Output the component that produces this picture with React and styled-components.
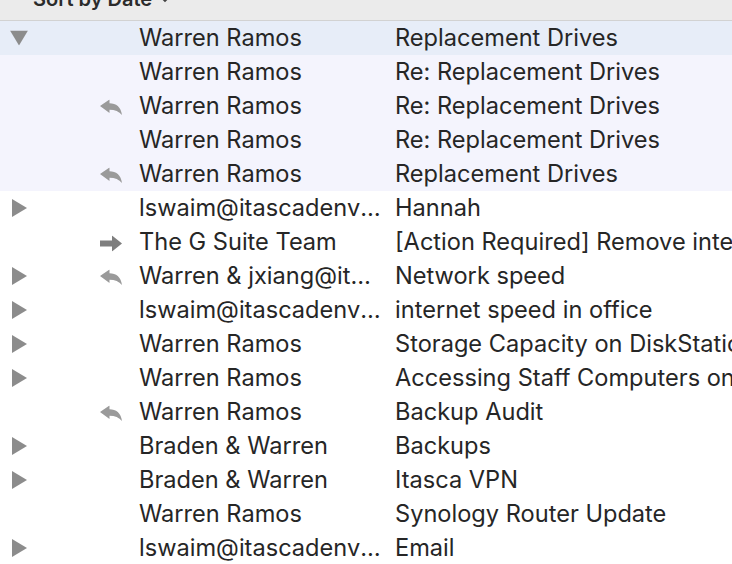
import React from "react";
import styled, { createGlobalStyle } from "styled-components";

const Global = createGlobalStyle`
  html, body { margin: 0; padding: 0; background: #fff; overflow: hidden; }
  body { font-family: Inter, "Liberation Sans", sans-serif; }
`;

const Page = styled.div`
  width: 732px;
  height: 564px;
  overflow: hidden;
  display: flex;
  flex-direction: column;
`;

const Header = styled.div`
  height: 21px;
  flex: 0 0 21px;
  background: #ebebeb;
  border-bottom: 1px solid #d2d2d2;
  box-sizing: border-box;
  overflow: hidden;
`;

const SortLabel = styled.div`
  font-size: 20px;
  font-weight: 600;
  color: #2b2b2b;
  padding-left: 33px;
  margin-top: -13px;
  display: flex;
  align-items: center;
  gap: 8px;
`;

const Row = styled.div`
  display: grid;
  grid-template-columns: 139px 256px 1fr;
  height: 34px;
  flex: 0 0 34px;
  box-sizing: border-box;
  padding-bottom: 1px;
  align-items: center;
  background: ${p =>
    p.tone === "selected" ? "#e7edf8" : p.tone === "thread" ? "#f4f4fd" : "#ffffff"};
  font-size: 23.6px;
  color: #262626;
  white-space: nowrap;
`;

const IconCell = styled.div`
  position: relative;
  height: 100%;
`;

const Disclosure = styled.div`
  position: absolute;
  left: ${p => (p.open ? "10px" : "12px")};
  top: 50%;
  transform: translateY(-50%);
  display: flex;
`;

const Status = styled.div`
  position: absolute;
  left: 100px;
  top: 50%;
  transform: translateY(-40%);
  display: flex;
`;

const Sender = styled.div`
  overflow: hidden;
  text-overflow: ellipsis;
  padding-right: 12px;
`;

const Subject = styled.div`
  overflow: hidden;
`;

const Tri = ({ open }) =>
  open ? (
    <svg width="18" height="15" viewBox="0 0 18 15">
      <polygon points="0,0 18,0 9,15" fill="#8c8c8c" />
    </svg>
  ) : (
    <svg width="15" height="18" viewBox="0 0 15 18">
      <polygon points="0,0 15,9 0,18" fill="#8c8c8c" />
    </svg>
  );

const ReplyIcon = () => (
  <svg width="22" height="16" viewBox="0 0 22 16">
    <path
      d="M0 6.5 L9.5 0 L9.5 3.6 C16 3.6 21 7 22 15.5 C19 12 15 10.2 9.5 10.2 L9.5 13.5 Z"
      fill="#9a9a9a"
    />
  </svg>
);

const ForwardIcon = () => (
  <svg width="22" height="16" viewBox="0 0 22 16">
    <path d="M0 5 L12 5 L12 0 L22 8 L12 16 L12 11 L0 11 Z" fill="#7e7e7e" />
  </svg>
);

const messages = [
  { sender: "Warren Ramos", subject: "Replacement Drives", tone: "selected", disc: "open" },
  { sender: "Warren Ramos", subject: "Re: Replacement Drives", tone: "thread" },
  { sender: "Warren Ramos", subject: "Re: Replacement Drives", tone: "thread", status: "reply" },
  { sender: "Warren Ramos", subject: "Re: Replacement Drives", tone: "thread" },
  { sender: "Warren Ramos", subject: "Replacement Drives", tone: "thread", status: "reply" },
  { sender: "lswaim@itascadenvironmental.com", subject: "Hannah", disc: "closed" },
  { sender: "The G Suite Team", subject: "[Action Required] Remove internet access", status: "forward" },
  { sender: "Warren & jxiang@itascadenvironmental.com", subject: "Network speed", disc: "closed", status: "reply" },
  { sender: "lswaim@itascadenvironmental.com", subject: "internet speed in office", disc: "closed" },
  { sender: "Warren Ramos", subject: "Storage Capacity on DiskStation", disc: "closed" },
  { sender: "Warren Ramos", subject: "Accessing Staff Computers on VPN", disc: "closed" },
  { sender: "Warren Ramos", subject: "Backup Audit", status: "reply" },
  { sender: "Braden & Warren", subject: "Backups", disc: "closed" },
  { sender: "Braden & Warren", subject: "Itasca VPN", disc: "closed" },
  { sender: "Warren Ramos", subject: "Synology Router Update" },
  { sender: "lswaim@itascadenvironmental.com", subject: "Email", disc: "closed" },
];

export default function App() {
  return (
    <Page>
      <Global />
      <Header>
        <SortLabel>
          Sort by Date
          <svg width="10" height="7" viewBox="0 0 10 7">
            <path d="M1 1 L5 5 L9 1" stroke="#444" strokeWidth="1.8" fill="none" />
          </svg>
        </SortLabel>
      </Header>
      {messages.map((m, i) => (
        <Row key={i} tone={m.tone}>
          <IconCell>
            {m.disc && (
              <Disclosure open={m.disc === "open"}>
                <Tri open={m.disc === "open"} />
              </Disclosure>
            )}
            {m.status && (
              <Status>{m.status === "reply" ? <ReplyIcon /> : <ForwardIcon />}</Status>
            )}
          </IconCell>
          <Sender>{m.sender}</Sender>
          <Subject>{m.subject}</Subject>
        </Row>
      ))}
    </Page>
  );
}
